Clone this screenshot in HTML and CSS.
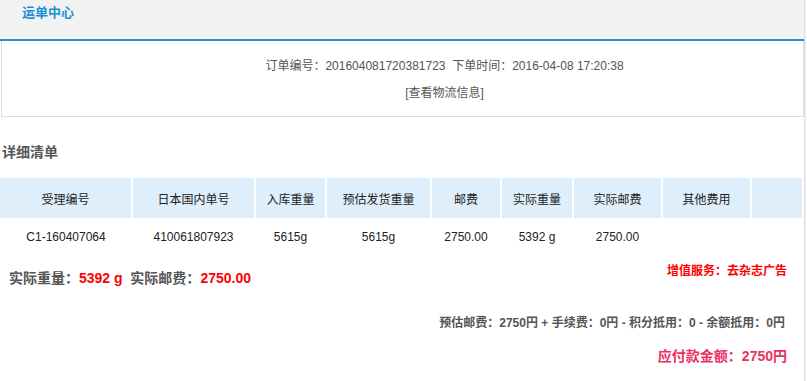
FILE: index.html
```html
<!DOCTYPE html>
<html lang="zh-CN">
<head>
  <meta charset="UTF-8">
  <title>运单中心</title>
  <link rel="stylesheet" href="styles.css">
</head>
<body>
  <div class="page">
    <div class="main">
      <div class="head">
        <h2>运单中心</h2>
      </div>
      <div class="order-box">
        <p class="order-line">订单编号：201604081720381723&nbsp;&nbsp;下单时间：2016-04-08 17:20:38</p>
        <p class="order-link"><a href="#">[查看物流信息]</a></p>
      </div>

      <h3 class="sub-title">详细清单</h3>
      <table class="detail">
        <colgroup>
          <col style="width:132px"><col style="width:123px"><col style="width:71px"><col style="width:105px">
          <col style="width:70px"><col style="width:72px"><col style="width:89px"><col style="width:89px"><col>
        </colgroup>
        <thead>
          <tr>
            <th>受理编号</th><th>日本国内单号</th><th>入库重量</th><th>预估发货重量</th>
            <th>邮费</th><th>实际重量</th><th>实际邮费</th><th>其他费用</th><th></th>
          </tr>
        </thead>
        <tbody>
          <tr>
            <td>C1-160407064</td><td>410061807923</td><td>5615g</td><td>5615g</td>
            <td>2750.00</td><td>5392 g</td><td>2750.00</td><td></td><td></td>
          </tr>
        </tbody>
      </table>

      <div class="summary">
        <div class="sum-left">实际重量：<span class="red">5392 g</span>&nbsp;&nbsp;实际邮费：<span class="red">2750.00</span></div>
        <div class="sum-right">增值服务：去杂志广告</div>
      </div>

      <p class="fees">预估邮费：2750円 + 手续费：0円 - 积分抵用：0 - 余额抵用：0円</p>
      <p class="total">应付款金额：2750円</p>
    </div>
    <div class="edge"></div>
  </div>
</body>
</html>
```

FILE: styles.css
```css
body { margin: 0; font-family: "Liberation Sans", Arial, "Noto Sans CJK SC", sans-serif; font-size: 12px; color: #555; background: #fff; }
.page { display: flex; min-height: 381px; }
.main { flex: 1; }
.edge { width: 6px; background: linear-gradient(to right, #d8d8d8, #f4f4f4 60%, #fff); }

.head { height: 39px; background: #f2f2f2; border-bottom: 2px solid #2b8dcf; }
.head h2 { margin: 0; padding: 4px 0 0 22px; font-size: 13px; line-height: 17px; color: #1b8fd6; }

.order-box { margin-left: 1px; height: 75px; border: 1px solid #ddd; border-top: none; padding-left: 84px; text-align: center; }
.order-line { margin: 0; padding-top: 17px; line-height: 17px; }
.order-link { margin: 10px 0 0; line-height: 17px; }
.order-link a { color: #555; text-decoration: none; }

.sub-title { margin: 0; padding: 25px 0 0 2px; font-size: 14px; line-height: 20px; color: #555; }

.detail { margin-top: 16px; width: 804px; border-collapse: collapse; table-layout: fixed; color: #222; }
.detail th { height: 40px; padding: 0; background: #dfeefb; border-right: 2px solid #fff; font-weight: normal; font-size: 12px; }
.detail td { height: 38px; padding: 0; text-align: center; font-size: 12px; }

.summary { display: flex; justify-content: space-between; padding: 0 17px 0 9px; }
.sum-left { padding-top: 13px; font-size: 14px; font-weight: bold; color: #555; line-height: 18px; }
.sum-right { padding-top: 6px; color: #f00; font-weight: bold; line-height: 18px; }
.red { color: #f00; }

.fees { margin: 0; padding: 27px 19px 0 0; text-align: right; font-weight: bold; line-height: 18px; }
.total { margin: 0; padding: 14px 17px 0 0; text-align: right; font-size: 14px; font-weight: bold; color: #ec3061; line-height: 20px; }
```
